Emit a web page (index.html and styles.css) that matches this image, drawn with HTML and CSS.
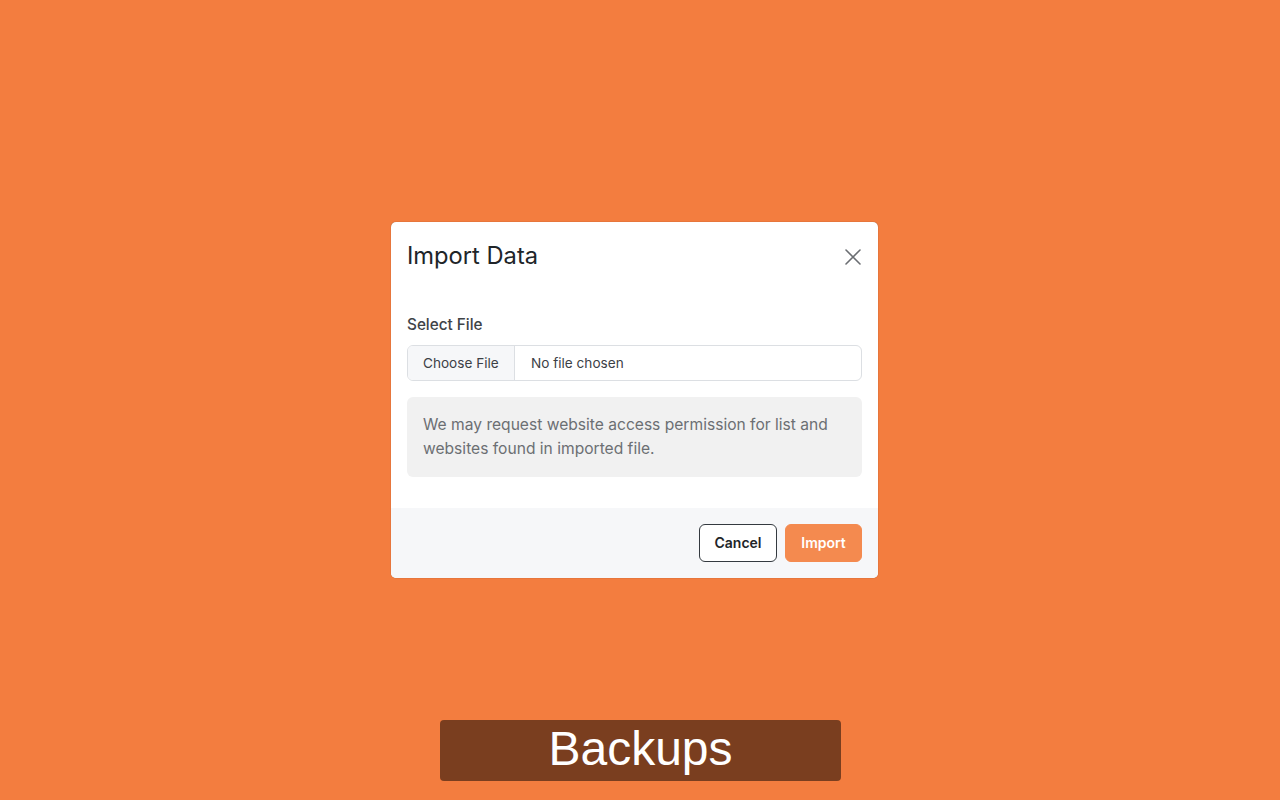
FILE: index.html
```html
<!DOCTYPE html>
<html lang="en">
<head>
<meta charset="utf-8">
<title>Import Data</title>
<link rel="stylesheet" href="styles.css">
</head>
<body>
<main class="stage">
  <section class="dialog">
    <header class="dialog-header">
      <h2 class="dialog-title">Import Data</h2>
      <button class="close-btn" aria-label="Close">
        <svg width="16" height="16" viewBox="0 0 16 16"><path d="M1 1 L15 15 M15 1 L1 15" stroke="#6b6e72" stroke-width="1.6" stroke-linecap="round" fill="none"/></svg>
      </button>
    </header>
    <div class="dialog-body">
      <div class="field-label">Select File</div>
      <div class="file-input">
        <span class="file-btn">Choose File</span>
        <span class="file-name">No file chosen</span>
      </div>
      <div class="info-box">We may request website access permission for list and websites found in imported file.</div>
    </div>
    <footer class="dialog-footer">
      <button class="btn btn-cancel">Cancel</button>
      <button class="btn btn-import">Import</button>
    </footer>
  </section>
  <div class="caption">Backups</div>
</main>
</body>
</html>
```

FILE: styles.css
```css
* { box-sizing: border-box; }
html, body { margin: 0; padding: 0; }
body {
  background: #f37d3f;
  width: 1280px;
  height: 800px;
  overflow: hidden;
  font-family: Inter, "Noto Sans", sans-serif;
}
.stage {
  display: flex;
  flex-direction: column;
  padding-top: 222px;
}
.dialog {
  margin-left: 391px;
  width: 487px;
  background: #fff;
  border-radius: 5px;
  overflow: hidden;
  box-shadow: 0 0 1px 0 rgba(50, 30, 20, 0.6);
}
.dialog-header {
  display: flex;
  align-items: center;
  justify-content: space-between;
  padding: 19px 16px 0 16px;
}
.dialog-title {
  margin: 0;
  font-size: 23.7px;
  font-weight: 400;
  line-height: 30px;
  color: #212529;
}
.close-btn {
  border: 0;
  background: none;
  padding: 0;
  margin-right: 1px;
  margin-top: 2px;
  width: 16px;
  height: 16px;
  display: flex;
}
.dialog-body {
  padding: 44px 16px 31px 16px;
}
.field-label {
  font-size: 15.3px;
  line-height: 20px;
  font-weight: 500;
  color: #3f4448;
  margin-bottom: 10px;
}
.file-input {
  display: flex;
  height: 36px;
  border: 1px solid #dcdfe3;
  border-radius: 6px;
  overflow: hidden;
  font-size: 13.6px;
  color: #3c4046;
}
.file-btn {
  display: flex;
  align-items: center;
  width: 107px;
  padding-left: 15px;
  background: #f6f7f9;
  border-right: 1px solid #dcdfe3;
}
.file-name {
  display: flex;
  align-items: center;
  padding-left: 16px;
}
.info-box {
  margin-top: 16px;
  background: #f1f1f1;
  border-radius: 6px;
  padding: 16px;
  font-size: 15.6px;
  line-height: 24px;
  color: #6c6f73;
}
.dialog-footer {
  display: flex;
  justify-content: flex-end;
  gap: 8px;
  padding: 16px;
  background: #f6f7f9;
}
.btn {
  height: 38px;
  border-radius: 6px;
  font-family: Inter, "Noto Sans", sans-serif;
  font-size: 14px;
  font-weight: 600;
  line-height: 34px;
  padding: 0;
  cursor: pointer;
}
.btn-cancel {
  width: 78px;
  background: #fff;
  border: 1px solid #343a40;
  color: #212529;
}
.btn-import {
  width: 77px;
  background: #f48a4f;
  border: 1px solid #f48a4f;
  color: #fff;
}
.caption {
  margin: 142px 0 0 440px;
  width: 401px;
  height: 61px;
  background: #7a3e1f;
  border-radius: 4px;
  color: #fff;
  font-family: "Liberation Sans", Arial, sans-serif;
  font-size: 48px;
  line-height: 58px;
  text-align: center;
}
```
